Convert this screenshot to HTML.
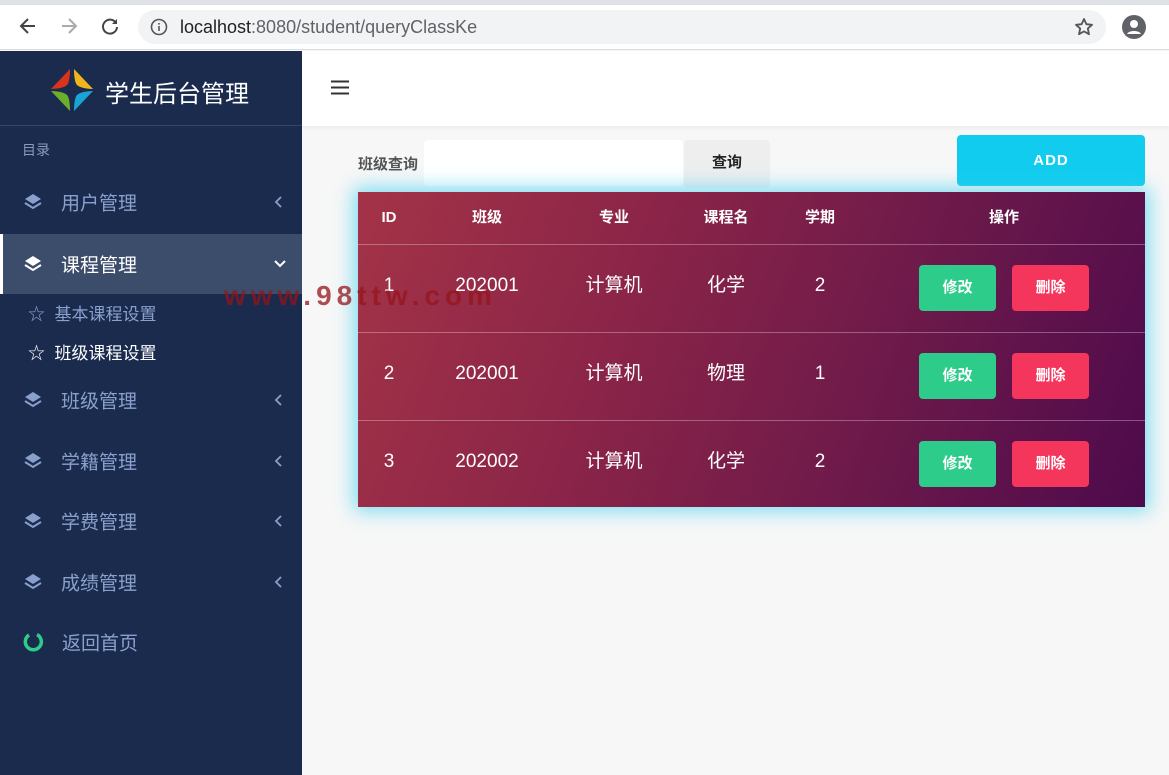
<!DOCTYPE html>
<html><head><meta charset="utf-8"><style>
*{margin:0;padding:0;box-sizing:border-box}
body{width:1169px;height:775px;overflow:hidden;background:#f7f7f7;font-family:"Liberation Sans","Noto Sans CJK SC",sans-serif;position:relative}
.a{position:absolute}
.chrome{left:0;top:0;width:1169px;height:50px;background:#fff;border-bottom:1px solid #dadce0}
.url{left:138px;top:10px;width:968px;height:34px;border-radius:17px;background:#f1f3f4;font-size:18px;color:#202124;line-height:34px;padding-left:42px}
.side{left:0;top:51px;width:302px;height:724px;background:#1a2b4e}
.menu{left:0;width:302px;height:60px;color:#8aa0cc;font-size:19px}
.menu .t{position:absolute;left:61px;top:50%;transform:translateY(-50%)}
.menu svg{position:absolute;left:23px;top:50%;transform:translateY(-50%)}
.menu svg.ch{left:274px}
.tbl{left:358px;top:192px;width:787px;height:315px;background:linear-gradient(110deg,#a33347 0%,#8a2448 35%,#6e1a4a 65%,#4e0a4c 100%);box-shadow:0 0 18px 4px rgba(70,210,240,.7)}
.th{color:#fff;font-weight:bold;font-size:15px;position:absolute;top:206px;height:24px;line-height:24px;transform:translateX(-50%);white-space:nowrap}
.td{color:#fff;font-size:19px;position:absolute;height:28px;line-height:28px;transform:translateX(-50%);white-space:nowrap}
.line{left:358px;width:787px;height:1px;background:rgba(255,255,255,.3)}
.btn{position:absolute;width:77px;height:46px;border-radius:4px;color:#fff;font-weight:bold;font-size:15px;text-align:center;line-height:46px}
</style></head><body>
<div class="a chrome"></div>
<div class="a" style="left:0;top:0;width:1169px;height:5px;background:#dee1e6"></div>
<svg class="a" style="left:18px;top:16px" width="20" height="20" viewBox="0 0 20 20"><path d="M17 10H4M10 3L3 10l7 7" stroke="#444" stroke-width="2" fill="none"/></svg>
<svg class="a" style="left:59px;top:16px" width="20" height="20" viewBox="0 0 20 20"><path d="M3 10h13M10 3l7 7-7 7" stroke="#aaa" stroke-width="2" fill="none"/></svg>
<svg class="a" style="left:100px;top:16px" width="20" height="20" viewBox="0 0 20 20"><path d="M16 7A7 7 0 1 0 17 11" stroke="#444" stroke-width="2" fill="none"/><path d="M17 3v5h-5z" fill="#444"/></svg>
<div class="a url">localhost<span style="color:#5f6368">:8080/student/queryClassKe</span></div>
<svg class="a" style="left:150px;top:18px" width="18" height="18" viewBox="0 0 18 18"><circle cx="9" cy="9" r="7.5" stroke="#555" stroke-width="1.6" fill="none"/><rect x="8.2" y="8" width="1.6" height="5" fill="#555"/><rect x="8.2" y="5" width="1.6" height="1.6" fill="#555"/></svg>
<svg class="a" style="left:1074px;top:17px" width="20" height="20" viewBox="0 0 20 20"><path d="M10 2l2.4 5.2 5.6.6-4.2 3.8 1.2 5.6L10 14.4 5 17.2l1.2-5.6L2 7.8l5.6-.6z" stroke="#555" stroke-width="1.8" fill="none" stroke-linejoin="round"/></svg>
<svg class="a" style="left:1122px;top:15px" width="24" height="24" viewBox="0 0 24 24"><circle cx="12" cy="12" r="12" fill="#5f6368"/><circle cx="12" cy="9" r="4" fill="#fff"/><path d="M5 19c2-4 12-4 14 0" fill="#fff"/></svg>

<div class="a side"></div>
<div class="a" style="left:0;top:125px;width:302px;height:1px;background:#34466a"></div>
<svg class="a" style="left:50px;top:68px" width="44" height="44" viewBox="0 0 44 44"><path d="M20 1L1 21c8 0 14-2 16-4s3-8 3-16z" fill="#d9331c"/><path d="M24 1l19 20c-8 0-14-2-16-4s-3-8-3-16z" fill="#f0b41c"/><path d="M1 23l19 20c0-8-1-14-3-16s-8-4-16-4z" fill="#6cae2c"/><path d="M43 23L24 43c0-8 1-14 3-16s8-4 16-4z" fill="#1aa4d4"/></svg>
<div class="a" style="left:105px;top:74px;color:#fff;font-size:24px">学生后台管理</div>
<div class="a" style="left:22px;top:140px;color:#8a9bbd;font-size:14px">目录</div>

<div class="a menu" style="top:172px"><svg width="20" height="20" viewBox="0 0 20 20"><path d="M10 2l8 5-8 5-8-5z" fill="#8aa0cc"/><path d="M2 11l8 5 8-5" stroke="#8aa0cc" stroke-width="2" fill="none"/></svg><span class="t">用户管理</span><svg class="ch" width="10" height="14" viewBox="0 0 10 14"><path d="M7 2L2 7l5 5" stroke="#8aa0cc" stroke-width="1.8" fill="none"/></svg></div>
<div class="a menu" style="top:234px;background:#3c4c6b;color:#fff;border-left:3px solid #fff"><svg width="20" height="20" viewBox="0 0 20 20" style="left:20px"><path d="M10 2l8 5-8 5-8-5z" fill="#fff"/><path d="M2 11l8 5 8-5" stroke="#fff" stroke-width="2" fill="none"/></svg><span class="t" style="left:58px">课程管理</span><svg width="14" height="14" viewBox="0 0 14 14" style="left:270px"><path d="M2 4l5 5 5-5" stroke="#fff" stroke-width="2" fill="none"/></svg></div>
<div class="a" style="left:28px;top:300px;color:#8aa0cc;font-size:17px">☆&nbsp; 基本课程设置</div>
<div class="a" style="left:28px;top:339px;color:#fff;font-size:17px">☆&nbsp; 班级课程设置</div>
<div class="a menu" style="top:370px"><svg width="20" height="20" viewBox="0 0 20 20"><path d="M10 2l8 5-8 5-8-5z" fill="#8aa0cc"/><path d="M2 11l8 5 8-5" stroke="#8aa0cc" stroke-width="2" fill="none"/></svg><span class="t">班级管理</span><svg class="ch" width="10" height="14" viewBox="0 0 10 14"><path d="M7 2L2 7l5 5" stroke="#8aa0cc" stroke-width="1.8" fill="none"/></svg></div>
<div class="a menu" style="top:431px"><svg width="20" height="20" viewBox="0 0 20 20"><path d="M10 2l8 5-8 5-8-5z" fill="#8aa0cc"/><path d="M2 11l8 5 8-5" stroke="#8aa0cc" stroke-width="2" fill="none"/></svg><span class="t">学籍管理</span><svg class="ch" width="10" height="14" viewBox="0 0 10 14"><path d="M7 2L2 7l5 5" stroke="#8aa0cc" stroke-width="1.8" fill="none"/></svg></div>
<div class="a menu" style="top:491px"><svg width="20" height="20" viewBox="0 0 20 20"><path d="M10 2l8 5-8 5-8-5z" fill="#8aa0cc"/><path d="M2 11l8 5 8-5" stroke="#8aa0cc" stroke-width="2" fill="none"/></svg><span class="t">学费管理</span><svg class="ch" width="10" height="14" viewBox="0 0 10 14"><path d="M7 2L2 7l5 5" stroke="#8aa0cc" stroke-width="1.8" fill="none"/></svg></div>
<div class="a menu" style="top:552px"><svg width="20" height="20" viewBox="0 0 20 20"><path d="M10 2l8 5-8 5-8-5z" fill="#8aa0cc"/><path d="M2 11l8 5 8-5" stroke="#8aa0cc" stroke-width="2" fill="none"/></svg><span class="t">成绩管理</span><svg class="ch" width="10" height="14" viewBox="0 0 10 14"><path d="M7 2L2 7l5 5" stroke="#8aa0cc" stroke-width="1.8" fill="none"/></svg></div>
<div class="a menu" style="top:612px"><svg width="22" height="22" viewBox="0 0 22 22"><path d="M14 3.6A8 8 0 1 1 6 4" stroke="#2ecc8a" stroke-width="3.5" fill="none"/></svg><span class="t" style="left:62px">返回首页</span></div>

<div class="a" style="left:302px;top:51px;width:867px;height:75px;background:#fff;box-shadow:0 2px 4px rgba(0,0,0,.05)"></div>
<svg class="a" style="left:331px;top:80px" width="18" height="15" viewBox="0 0 18 15"><path d="M0 1.5h18M0 7.5h18M0 13.5h18" stroke="#333" stroke-width="2"/></svg>

<div class="a" style="left:358px;top:153px;font-size:15px;color:#555;font-weight:bold">班级查询</div>
<div class="a" style="left:424px;top:140px;width:259px;height:46px;background:#fff;border-radius:4px"></div>
<div class="a" style="left:684px;top:140px;width:86px;height:48px;background:#eee;border-radius:4px;text-align:center;line-height:46px;font-size:15px;font-weight:bold;color:#222">查询</div>
<div class="a" style="left:957px;top:135px;width:188px;height:51px;background:#11ccee;border-radius:4px;color:#fff;font-weight:bold;font-size:15px;text-align:center;line-height:51px;letter-spacing:1px">ADD</div>

<div class="a tbl"></div>
<div class="a line" style="top:244px"></div>
<div class="a line" style="top:332px"></div>
<div class="a line" style="top:420px"></div>
<div class="th" style="left:389px">ID</div>
<div class="th" style="left:487px">班级</div>
<div class="th" style="left:614px">专业</div>
<div class="th" style="left:726px">课程名</div>
<div class="th" style="left:820px">学期</div>
<div class="th" style="left:1004px">操作</div>

<div class="td" style="left:389px;top:272px">1</div><div class="td" style="left:487px;top:272px">202001</div><div class="td" style="left:614px;top:272px">计算机</div><div class="td" style="left:726px;top:272px">化学</div><div class="td" style="left:820px;top:272px">2</div>
<div class="btn" style="left:919px;top:265px;background:#2ecc8a">修改</div><div class="btn" style="left:1012px;top:265px;background:#f5365c">删除</div>
<div class="td" style="left:389px;top:360px">2</div><div class="td" style="left:487px;top:360px">202001</div><div class="td" style="left:614px;top:360px">计算机</div><div class="td" style="left:726px;top:360px">物理</div><div class="td" style="left:820px;top:360px">1</div>
<div class="btn" style="left:919px;top:353px;background:#2ecc8a">修改</div><div class="btn" style="left:1012px;top:353px;background:#f5365c">删除</div>
<div class="td" style="left:389px;top:448px">3</div><div class="td" style="left:487px;top:448px">202002</div><div class="td" style="left:614px;top:448px">计算机</div><div class="td" style="left:726px;top:448px">化学</div><div class="td" style="left:820px;top:448px">2</div>
<div class="btn" style="left:919px;top:441px;background:#2ecc8a">修改</div><div class="btn" style="left:1012px;top:441px;background:#f5365c">删除</div>

<div class="a" style="left:224px;top:280px;font-size:28px;font-weight:bold;color:rgba(150,20,25,.75);letter-spacing:5px">www.98ttw.com</div>
</body></html>
